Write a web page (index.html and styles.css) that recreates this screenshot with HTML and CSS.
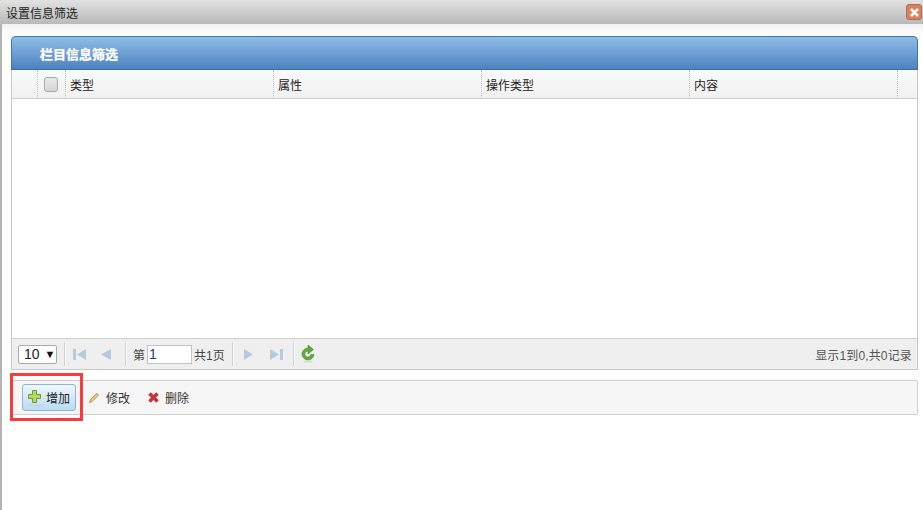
FILE: index.html
```html
<!DOCTYPE html>
<html lang="zh">
<head>
<meta charset="utf-8">
<title>设置信息筛选</title>
<link rel="stylesheet" href="styles.css">
</head>
<body>
<div class="window">
  <div class="titlebar">
    <span class="title">设置信息筛选</span>
    <span class="close"><svg width="11" height="11" viewBox="0 0 11 11"><path d="M2 2l7 7M9 2l-7 7" stroke="#fff" stroke-width="2.6" fill="none"/></svg></span>
  </div>
  <div class="content">
    <div class="panel">
      <div class="panel-head">栏目信息筛选</div>
      <div class="grid-head">
        <div class="cell c-num"></div>
        <div class="cell c-check"><span class="checkbox"></span></div>
        <div class="cell c-col">类型</div>
        <div class="cell c-col">属性</div>
        <div class="cell c-col">操作类型</div>
        <div class="cell c-col">内容</div>
        <div class="cell c-end"></div>
      </div>
      <div class="grid-body"></div>
      <div class="pager">
        <div class="select"><span>10</span><span class="arrow">▼</span></div>
        <i class="sep"></i>
        <span class="pbtn"><svg width="15" height="13" viewBox="0 0 15 13"><path d="M1 1h3v11H1zM14 1v11L5 6.500z" fill="#b4cbdd"/></svg></span>
        <span class="pbtn pbtn-prev"><svg width="12" height="13" viewBox="0 0 12 13"><path d="M11 1v11L1 6.500z" fill="#b4cbdd"/></svg></span>
        <i class="sep"></i>
        <span class="ptext">第</span>
        <span class="pageinput">1</span>
        <span class="ptext">共1页</span>
        <i class="sep"></i>
        <span class="pbtn pbtn-next"><svg width="11" height="13" viewBox="0 0 11 13"><path d="M1 1v11l9-5.500z" fill="#b4cbdd"/></svg></span>
        <span class="pbtn pbtn-last"><svg width="15" height="13" viewBox="0 0 15 13"><path d="M1 1v11l9-5.500zM11 1h3v11h-3z" fill="#b4cbdd"/></svg></span>
        <i class="sep sep-end"></i>
        <span class="refresh"><svg width="16" height="18" viewBox="0 0 16 18"><path d="M8 3a6 6 0 1 0 6 6.500h-3.200a3 3 0 1 1-2.800-3.500v3l5.500-4.500L8 0z" fill="#62a83c" stroke="#4a8f2b" stroke-width=".6"/><ellipse cx="8" cy="16.500" rx="5" ry="1" fill="#d6dcd2"/></svg></span>
        <span class="summary">显示1到0,共0记录</span>
      </div>
    </div>
    <div class="actions">
      <span class="btn btn-add"><svg width="16" height="17" viewBox="0 0 16 17"><path d="M5.500 1.500h4v4h4v4h-4v4h-4v-4h-4v-4h4z" fill="#b4d962" stroke="#6f9a2c"/><path d="M0 16h16" stroke="#c6ccd0"/></svg>增加</span>
      <span class="btn btn-edit"><svg width="12" height="13" viewBox="0 0 12 13"><path d="M1.500 11.500l.8-2.800L8.800 2.200l1.800 1.800-6.500 6.600z" fill="#e8c878" stroke="#8a7440" stroke-width=".6"/></svg>修改</span>
      <span class="btn btn-del"><svg width="13" height="13" viewBox="0 0 13 13"><path d="M2.500 2.500l8 8M10.500 2.500l-8 8" stroke="#c9353a" stroke-width="3.600" fill="none"/></svg>删除</span>
      <span class="highlight"></span>
    </div>
  </div>
</div>
</body>
</html>
```
FILE: styles.css
```css
* { box-sizing: border-box; }
html, body { margin: 0; height: 100%; background: #fff; overflow: hidden; }
body { font: 12px "Liberation Sans", "Noto Sans CJK SC", sans-serif; color: #222; }
.window { height: 510px; border-left: 2px solid #b4b4b4; }
.titlebar {
  height: 24px; margin-left: -2px; display: flex; align-items: center; justify-content: space-between;
  padding: 0 1px 0 6px;
  background: linear-gradient(#e2e2e2, #b9b9b9);
}
.title { color: #222; font-size: 12px; }
.close {
  width: 16px; height: 16px; border-radius: 3px; display: flex; align-items: center; justify-content: center;
  background: #d9825e; border: 1px solid #b86a4c;
}
.content { padding: 12px 5px 0 9px; background: linear-gradient(#f2f2f2, #fff 12px); height: 486px; position: relative; }
.panel { border: 1px solid #c8c8c8; border-top: 0; border-radius: 5px 5px 0 0; }
.panel-head {
  height: 34px; margin: 0 -1px; padding-left: 28px; line-height: 36px;
  color: #fff; font-weight: bold; font-size: 13px; text-shadow: 0 0 1px #dfeaf6;
  background: linear-gradient(#8fbde8, #4d82bf);
  border: 1px solid #3f75b5; border-bottom-color: #3a6eab; border-radius: 5px 5px 0 0;
}
.grid-head {
  height: 29px; display: flex; background: linear-gradient(#fafafa, #f1f1f1);
  border-bottom: 1px solid #cfcfcf;
}
.cell { display: flex; align-items: center; border-right: 1px dotted #c4c4c4; font-size: 12px; color: #222; padding-left: 4px; height: 28px; }
.c-num { width: 26px; }
.c-check { width: 28px; padding-left: 6px; }
.c-col { width: 208px; }
.c-end { border-right: 0; flex: 1; }
.checkbox { width: 14px; height: 15px; border: 1px solid #a9a9a9; border-radius: 3px; background: linear-gradient(#e9e9e9, #d6d6d6); }
.grid-body { height: 239px; background: #fff; }
.pager {
  height: 31px; display: flex; align-items: center; padding: 0 5px 0 6px;
  background: #efefef; border-top: 1px solid #cfcfcf; color: #555;
}
.select {
  width: 39px; height: 19px; border: 1px solid #aaa; border-radius: 2px; background: #fff;
  display: flex; align-items: center; gap: 5px; padding-left: 5px; color: #222; font-size: 14px;
}
.arrow { font-size: 11px; color: #111; }
.sep { width: 1px; height: 24px; background: #d2d2d2; border-right: 1px solid #fafafa; box-sizing: content-box; margin: 0 6px 0 7px; }
.sep-end { margin-left: 9px; }
.pbtn { display: flex; }
.pbtn-prev { margin-left: 13px; margin-right: 6px; }
.pbtn-next { margin-left: 3px; }
.pbtn-last { margin-left: 15px; }
.ptext { color: #444; font-size: 12px; }
.pageinput { width: 45px; height: 19px; margin: 0 2px; border: 1px solid #c4c4c4; background: #fff; color: #14408a; font-size: 14px; line-height: 17px; padding-left: 1px; }
.refresh { display: flex; margin-left: -1px; }
.summary { margin-left: auto; color: #555; font-size: 12px; letter-spacing: .15px; }
.actions {
  margin-top: 10px; height: 35px; display: flex; align-items: center; padding-left: 10px;
  background: #f6f6f6; border: 1px solid #cfcfcf; border-radius: 2px; position: relative;
}
.btn { height: 27px; display: flex; align-items: center; flex: none; white-space: nowrap; color: #333; font-size: 12px; }
.btn-add { width: 54px; gap: 3px; padding-left: 4px; border: 1px solid #8cb4d8; border-radius: 3px; background: linear-gradient(#f0f7fc, #b9dcf1); color: #222; }
.btn-edit { margin-left: 12px; gap: 6px; }
.btn-del { margin-left: 17px; gap: 5px; }
.highlight { position: absolute; left: -2px; top: -8px; width: 73px; height: 48px; border: 3px solid #fb3a3a; }
```
